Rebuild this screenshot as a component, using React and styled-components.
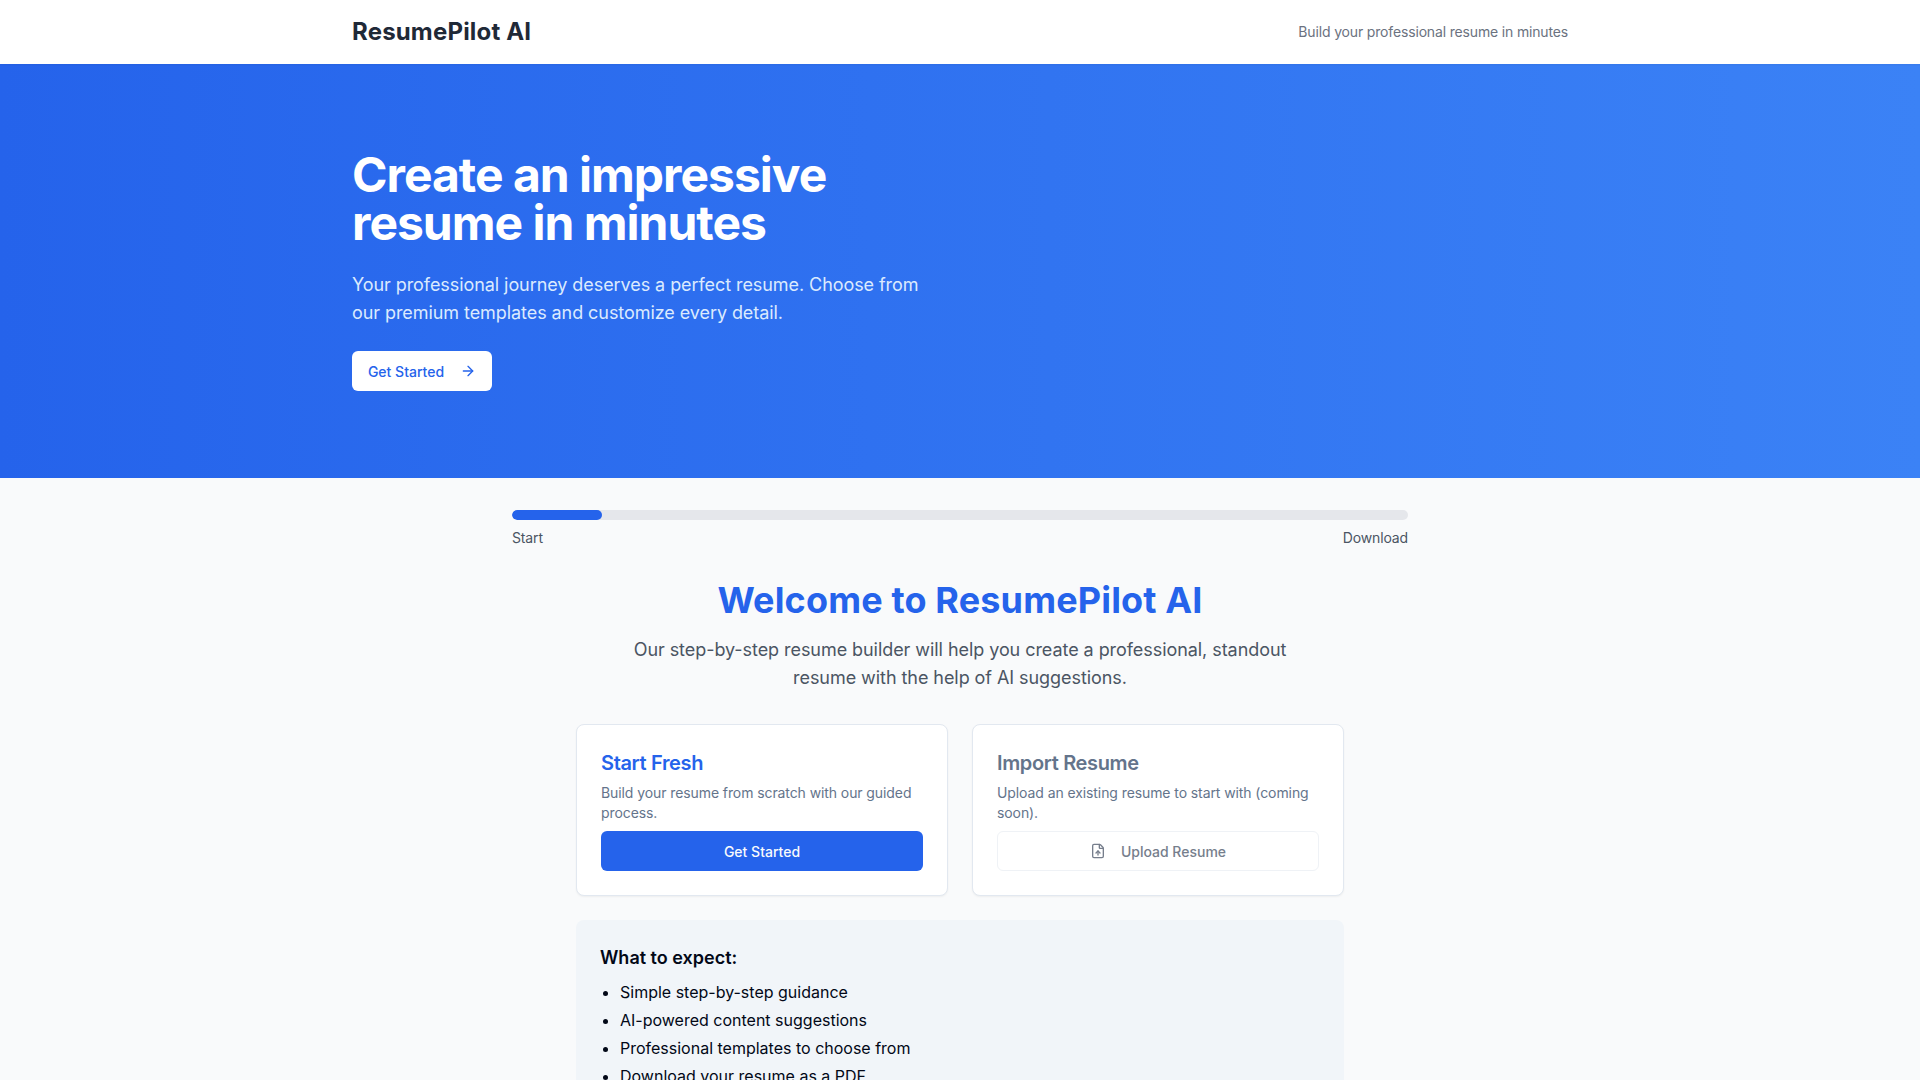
import React from "react";
import styled, { createGlobalStyle } from "styled-components";
import { ArrowRight, FileUp } from "lucide-react";

const GlobalStyle = createGlobalStyle`
  * { box-sizing: border-box; }
  body {
    margin: 0;
    background: #f9fafb;
    color: #020817;
    font-family: Inter, "Liberation Sans", sans-serif;
    font-feature-settings: "rlig" 1, "calt" 1;
  }
`;

const TopBar = styled.header`
  position: relative;
  height: 64px;
  background: #fff;
  box-shadow: 0 1px 2px rgba(0, 0, 0, 0.05);
`;

const Container = styled.div`
  max-width: 1280px;
  margin: 0 auto;
  padding: 0 32px;
`;

const TopBarInner = styled(Container)`
  height: 100%;
  display: flex;
  align-items: center;
  justify-content: space-between;
`;

const Logo = styled.div`
  font-size: 24px;
  line-height: 32px;
  font-weight: 700;
  letter-spacing: 0.18px;
  color: #1f2937;
`;

const Tagline = styled.div`
  font-size: 14px;
  line-height: 20px;
  letter-spacing: -0.16px;
  color: #6b7280;
`;

const Hero = styled.section`
  height: 414px;
  padding-top: 87px;
  background: linear-gradient(to right, #2563eb, #3b82f6);
  color: #fff;
`;

const HeroTitle = styled.h1`
  margin: 0 0 24px;
  max-width: 640px;
  font-size: 48px;
  line-height: 48px;
  font-weight: 700;
  letter-spacing: -1px;
`;

const HeroText = styled.p`
  margin: 0 0 24px;
  max-width: 576px;
  font-size: 18px;
  line-height: 28px;
  letter-spacing: -0.07px;
  color: #dbeafe;
`;

const Button = styled.button`
  display: inline-flex;
  align-items: center;
  justify-content: center;
  gap: 8px;
  height: 40px;
  border-radius: 6px;
  font-family: inherit;
  font-size: 14px;
  font-weight: 500;
  cursor: pointer;
`;

const HeroButton = styled(Button)`
  width: 140px;
  gap: 16px;
  border: 0;
  background: #fff;
  color: #2563eb;
`;

const Main = styled.main`
  padding-top: 32px;
`;

const Progress = styled.div`
  width: 896px;
  margin: 0 auto 32px;
`;

const Track = styled.div`
  height: 10px;
  border-radius: 999px;
  background: #e5e7eb;
  overflow: hidden;
`;

const Fill = styled.div`
  height: 100%;
  border-radius: 999px;
  background: #2563eb;
`;

const ProgressLabels = styled.div`
  display: flex;
  justify-content: space-between;
  margin-top: 8px;
  font-size: 14px;
  line-height: 20px;
  letter-spacing: -0.15px;
  color: #4b5563;
`;

const Welcome = styled.div`
  width: 768px;
  margin: 0 auto;
`;

const WelcomeTitle = styled.h2`
  margin: 0 0 16px;
  text-align: center;
  font-size: 36px;
  line-height: 40px;
  font-weight: 700;
  letter-spacing: 0.15px;
  color: #2563eb;
`;

const WelcomeText = styled.p`
  width: 672px;
  margin: 0 auto 32px;
  text-align: center;
  font-size: 18px;
  line-height: 28px;
  letter-spacing: -0.06px;
  color: #4b5563;
`;

const Cards = styled.div`
  display: grid;
  grid-template-columns: 1fr 1fr;
  gap: 24px;
`;

const Card = styled.div`
  padding: 24px;
  background: #fff;
  border: 1px solid #e2e8f0;
  border-radius: 8px;
  box-shadow: 0 1px 2px rgba(0, 0, 0, 0.05);
`;

const CardTitle = styled.h3`
  margin: 0 0 6px;
  font-size: 20px;
  line-height: 28px;
  font-weight: 600;
  letter-spacing: -0.35px;
  color: ${(p) => (p.$muted ? "#64748b" : "#2563eb")};
`;

const CardText = styled.p`
  margin: 0 0 8px;
  font-size: 14px;
  line-height: 20px;
  letter-spacing: -0.09px;
  color: #64748b;
`;

const PrimaryButton = styled(Button)`
  width: 100%;
  border: 0;
  background: #2563eb;
  color: #f8fafc;
`;

const OutlineButton = styled(Button)`
  width: 100%;
  gap: 15px;
  border: 1px solid #eff2f6;
  background: #fff;
  color: #767e8c;
`;

const Expect = styled.div`
  margin-top: 24px;
  padding: 24px;
  background: #f1f5f9;
  border-radius: 8px;
`;

const ExpectTitle = styled.h4`
  margin: 0 0 8px;
  font-size: 18px;
  line-height: 28px;
  font-weight: 600;
`;

const ExpectList = styled.ul`
  margin: 0;
  padding-left: 20px;
  font-size: 16px;
  line-height: 24px;
`;

const ExpectItem = styled.li`
  margin-bottom: 4px;
`;

const expectations = [
  "Simple step-by-step guidance",
  "AI-powered content suggestions",
  "Professional templates to choose from",
  "Download your resume as a PDF",
];

export default function App() {
  return (
    <>
      <GlobalStyle />
      <TopBar>
        <TopBarInner>
          <Logo>ResumePilot AI</Logo>
          <Tagline>Build your professional resume in minutes</Tagline>
        </TopBarInner>
      </TopBar>
      <Hero>
        <Container>
          <HeroTitle>Create an impressive resume in minutes</HeroTitle>
          <HeroText>
            Your professional journey deserves a perfect resume. Choose from our
            premium templates and customize every detail.
          </HeroText>
          <HeroButton>
            Get Started
            <ArrowRight size={16} />
          </HeroButton>
        </Container>
      </Hero>
      <Main>
        <Progress>
          <Track>
            <Fill style={{ width: "10%" }} />
          </Track>
          <ProgressLabels>
            <span>Start</span>
            <span>Download</span>
          </ProgressLabels>
        </Progress>
        <Welcome>
          <WelcomeTitle>Welcome to ResumePilot AI</WelcomeTitle>
          <WelcomeText>
            Our step-by-step resume builder will help you create a professional,
            standout resume with the help of AI suggestions.
          </WelcomeText>
          <Cards>
            <Card>
              <CardTitle>Start Fresh</CardTitle>
              <CardText>
                Build your resume from scratch with our guided process.
              </CardText>
              <PrimaryButton>Get Started</PrimaryButton>
            </Card>
            <Card>
              <CardTitle $muted>Import Resume</CardTitle>
              <CardText>
                Upload an existing resume to start with (coming soon).
              </CardText>
              <OutlineButton>
                <FileUp size={16} />
                Upload Resume
              </OutlineButton>
            </Card>
          </Cards>
          <Expect>
            <ExpectTitle>What to expect:</ExpectTitle>
            <ExpectList>
              {expectations.map((item) => (
                <ExpectItem key={item}>{item}</ExpectItem>
              ))}
            </ExpectList>
          </Expect>
        </Welcome>
      </Main>
    </>
  );
}
